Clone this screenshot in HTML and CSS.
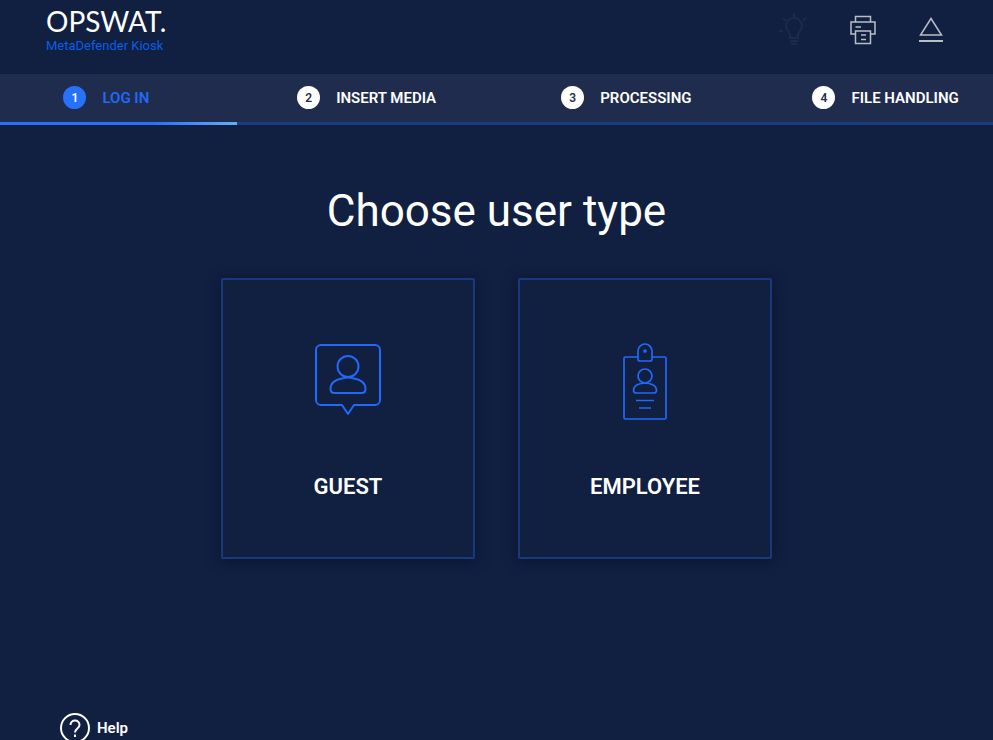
FILE: index.html
```html
<!DOCTYPE html>
<html lang="en">
<head>
<meta charset="utf-8">
<meta name="viewport" content="width=device-width, initial-scale=1">
<title>MetaDefender Kiosk</title>
<link rel="stylesheet" href="styles.css">
</head>
<body>
<header class="header">
  <div class="brand">
    <span class="brand-name">OPSWAT.</span>
    <span class="brand-product">MetaDefender Kiosk</span>
  </div>
  <div class="tools">
    <button class="tool tool-off" type="button" aria-label="Light" disabled>
      <svg width="28" height="34" viewBox="0 0 28 34" fill="none" stroke="currentColor" stroke-width="2">
        <path d="M11 25v-3c0-3-4-4-4-9a8 8 0 0 1 16 0c0 5-4 6-4 9v3zM11 28h8M12 31h6M15 0v4M4 5l3 3M27 5l-3 3M0 18h4"/>
      </svg>
    </button>
    <button class="tool" type="button" aria-label="Print">
      <svg width="26" height="30" viewBox="0 0 26 30" fill="none" stroke="currentColor" stroke-width="1.5">
        <path d="M5.500 7V1.500h15V7M5.500 19H1V7h24v12h-4.500M5.500 16h15v12.500h-15zM5.500 12h5.500M11 20h5M11 24.500h5"/>
      </svg>
    </button>
    <button class="tool" type="button" aria-label="Eject">
      <svg width="24" height="26" viewBox="0 0 24 26" fill="none" stroke="currentColor">
        <path stroke-width="1.5" d="M12 1.500 22.500 18h-21z"/>
        <path stroke-width="2" d="M0 24h24"/>
      </svg>
    </button>
  </div>
</header>
<nav aria-label="Progress">
  <ol class="steps">
    <li class="step step-active" aria-current="step"><span class="step-number">1</span>LOG IN</li>
    <li class="step"><span class="step-number">2</span>INSERT MEDIA</li>
    <li class="step"><span class="step-number">3</span>PROCESSING</li>
    <li class="step"><span class="step-number">4</span>FILE HANDLING</li>
  </ol>
</nav>
<main class="main">
  <h1 class="title">Choose user type</h1>
  <div class="cards">
    <button class="card" type="button">
      <svg class="card-icon" width="66" height="78" viewBox="0 0 66 78" fill="none" stroke="currentColor" stroke-width="2" stroke-linejoin="round">
        <path d="M6 2h54a5 5 0 0 1 5 5v50a5 5 0 0 1-5 5H39l-6 9-6-9H6a5 5 0 0 1-5-5V7a5 5 0 0 1 5-5z"/>
        <circle cx="33" cy="23.500" r="10.500"/>
        <path d="M27 35.500C19 37 15.500 41 15.500 46c0 3 1 4 4 4h27c3 0 4-1 4-4 0-5-3.500-9-11.500-10.500-3-1-9-1-12 0z"/>
      </svg>
      GUEST
    </button>
    <button class="card" type="button">
      <svg class="card-icon" width="44" height="78" viewBox="0 0 44 78" fill="none" stroke="currentColor" stroke-width="1.7" stroke-linejoin="round">
        <path d="M15 14H2.500Q1 14 1 15.500v59Q1 76 2.500 76h39q1.500 0 1.500-1.500v-59Q43 14 41.500 14H29"/>
        <path d="M15 8a7 7 0 0 1 14 0v8q0 2-2 2H17q-2 0-2-2z"/>
        <circle cx="22" cy="8" r="1" fill="currentColor"/>
        <circle cx="22" cy="33" r="7"/>
        <path d="M18 40.500c-5 1-7.500 4-7.500 7 0 2 1 2.500 3 2.500h17c2 0 3-.5 3-2.500 0-3-2.500-6-7.500-7-2-.7-6-.7-8 0zM13 57.500h18M16 65h12"/>
      </svg>
      EMPLOYEE
    </button>
  </div>
</main>
<footer class="footer">
  <a class="help" href="#help">
    <svg width="30" height="30" viewBox="0 0 30 30" fill="none" stroke="currentColor" stroke-width="2" aria-hidden="true">
      <circle cx="15" cy="15" r="14"/>
      <path d="M10.500 12c0-6 9-6 9 0 0 3.500-4.500 3.500-4.500 7.500M15 21.500v2.500"/>
    </svg>
    Help
  </a>
</footer>
</body>
</html>
```
FILE: styles.css
```css
* {
  box-sizing: border-box;
}

body {
  margin: 0;
  height: 100vh;
  overflow: hidden;
  display: flex;
  flex-direction: column;
  background: #111f41;
  color: #fff;
  font-family: Roboto, "Liberation Sans", sans-serif;
}

button {
  font: inherit;
  color: inherit;
  background: none;
  border: 0;
  padding: 0;
  cursor: pointer;
}

.header {
  display: flex;
  justify-content: space-between;
  align-items: flex-start;
  padding: 6px 50px 0 46px;
  min-height: 74px;
}

.brand {
  display: flex;
  flex-direction: column;
}

.brand-name {
  font: 400 28px/30px Lato, sans-serif;
}

.brand-product {
  font-size: 13px;
  line-height: 20px;
  color: #0b5ee6;
}

.tools {
  display: flex;
  align-items: center;
  gap: 43px;
  height: 48px;
}

.tool {
  display: flex;
  color: #b9bdc6;
}

.tool-off {
  color: #1c2a4b;
}

.steps {
  display: grid;
  grid-template-columns: 237fr 260fr 260fr 237fr;
  margin: 0;
  padding: 0;
  list-style: none;
  background: #202c4d;
}

.step {
  display: flex;
  align-items: center;
  justify-content: center;
  gap: 16px;
  height: 51px;
  padding-bottom: 1px;
  border-bottom: 3px solid #193b7f;
  font-size: 15px;
  font-weight: 600;
}

.step:first-child {
  padding-right: 24px;
}

.step:last-child {
  padding-left: 22px;
}

.step-active {
  color: #2269f5;
  border-image: linear-gradient(90deg, #2672fb 65%, #65aef5) 1;
}

.step-number {
  display: grid;
  place-items: center;
  width: 23px;
  height: 23px;
  border-radius: 50%;
  background: #fff;
  color: #26304a;
  font-size: 12px;
}

.step-active .step-number {
  background: #2672fb;
  color: #fff;
}

.main {
  flex: 1;
  display: flex;
  flex-direction: column;
  align-items: center;
  padding-top: 56px;
}

.title {
  margin: 0 0 37px;
  font-size: 44px;
  line-height: 60px;
  font-weight: 400;
}

.cards {
  display: flex;
  gap: 43px;
}

.card {
  display: flex;
  flex-direction: column;
  align-items: center;
  width: 254px;
  height: 281px;
  padding-top: 63px;
  border: 2px solid #183a7d;
  border-radius: 2px;
  box-shadow: 0 2px 14px #0a1530;
  font-size: 22px;
  line-height: 32px;
  font-weight: 600;
}

.card-icon {
  margin-bottom: 50px;
  color: #2269f5;
}

.footer {
  height: 27px;
  padding-left: 60px;
}

.help {
  display: inline-flex;
  align-items: center;
  gap: 7px;
  color: #fff;
  font-size: 15px;
  font-weight: 600;
  text-decoration: none;
}
```
